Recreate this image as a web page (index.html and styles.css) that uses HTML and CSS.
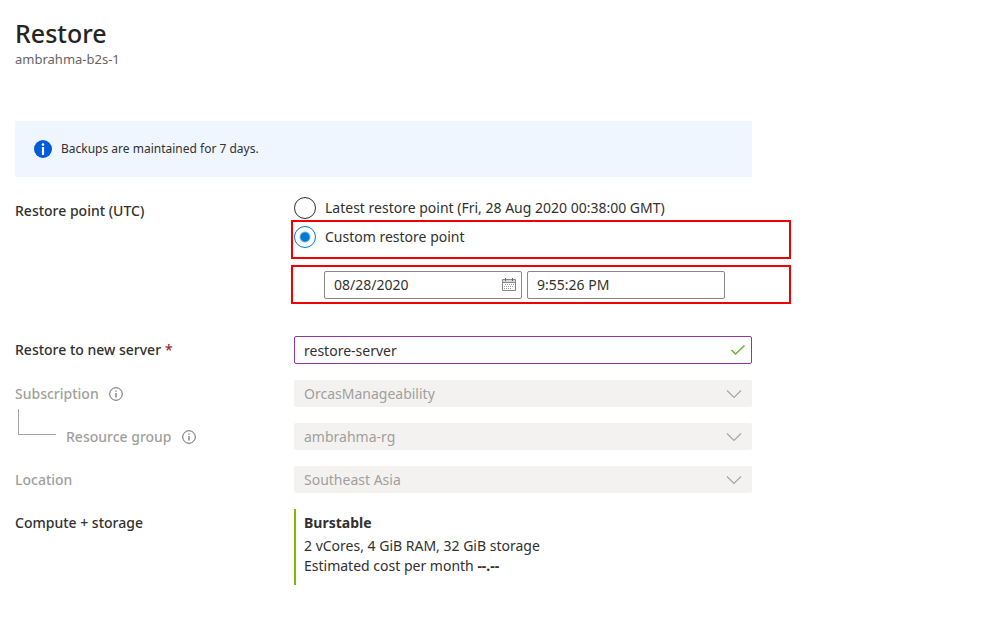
FILE: index.html
```html
<!DOCTYPE html>
<html lang="en">
<head>
<meta charset="utf-8">
<title>Restore</title>
<link rel="stylesheet" href="styles.css">
</head>
<body>
<main class="page">
  <header class="page-header">
    <h1>Restore</h1>
    <p>ambrahma-b2s-1</p>
  </header>

  <div class="banner" role="status">
    <svg class="banner-icon" viewBox="0 0 18 18" aria-hidden="true">
      <circle cx="9" cy="9" r="9" fill="#015cda"/>
      <circle cx="9" cy="4.6" r="1.3" fill="#fff"/>
      <rect x="7.9" y="7" width="2.2" height="8" rx="0.4" fill="#fff"/>
    </svg>
    <span>Backups are maintained for 7 days.</span>
  </div>

  <form class="form">
    <div class="row row-point">
      <span class="label" id="point-label">Restore point (UTC)</span>
      <div class="point" role="radiogroup" aria-labelledby="point-label">
        <label class="option"><input type="radio" name="point"><span>Latest restore point (Fri, 28 Aug 2020 00:38:00 GMT)</span></label>
        <div class="highlight highlight-option">
          <label class="option"><input type="radio" name="point" checked><span>Custom restore point</span></label>
        </div>
        <div class="highlight highlight-time">
          <div class="date">
            <input class="text" type="text" value="08/28/2020" aria-label="Restore date">
            <svg class="date-icon" viewBox="0 0 14 14" aria-hidden="true">
              <path d="M1 2h12v3H1z" fill="#d8d8d8"/>
              <path d="M0.5 1.5h13v11h-13zM0.5 4.5h13" fill="none" stroke="#8a8886"/>
              <path d="M3.5 0v3M10.5 0v3" fill="none" stroke="#666"/>
              <path d="M3 6.5h9M2 8.5h10M2 10.5h7" fill="none" stroke="#999" stroke-dasharray="1 1"/>
            </svg>
          </div>
          <input class="text" type="text" value="9:55:26 PM" aria-label="Restore time">
        </div>
      </div>
    </div>

    <div class="row">
      <label class="label" for="server">Restore to new server <span class="required">*</span></label>
      <div class="field">
        <input class="text text-valid" id="server" type="text" value="restore-server">
        <svg class="field-icon" viewBox="0 0 16 16" aria-hidden="true"><path d="M1.5 8l4 4L14.5 3.5" fill="none" stroke="#6bb12f" stroke-width="1.5"/></svg>
      </div>
    </div>

    <div class="row row-disabled">
      <div class="label"><label for="subscription">Subscription</label>
        <svg class="info" viewBox="0 0 14 14" aria-hidden="true"><circle cx="7" cy="7" r="6.3" fill="none" stroke="#666"/><path d="M7 3.5v1.2M7 6v4.5" stroke="#666" stroke-width="1.2"/></svg>
      </div>
      <div class="field">
        <select id="subscription" disabled><option>OrcasManageability</option></select>
        <svg class="field-icon chevron" viewBox="0 0 16 16" aria-hidden="true"><path d="M1 4.5l7 7 7-7" fill="none" stroke="#a6a6a6" stroke-width="1.2"/></svg>
      </div>
    </div>

    <div class="row row-disabled">
      <div class="label label-nested"><label for="group">Resource group</label>
        <svg class="info" viewBox="0 0 14 14" aria-hidden="true"><circle cx="7" cy="7" r="6.3" fill="none" stroke="#666"/><path d="M7 3.5v1.2M7 6v4.5" stroke="#666" stroke-width="1.2"/></svg>
      </div>
      <div class="field">
        <select id="group" disabled><option>ambrahma-rg</option></select>
        <svg class="field-icon chevron" viewBox="0 0 16 16" aria-hidden="true"><path d="M1 4.5l7 7 7-7" fill="none" stroke="#a6a6a6" stroke-width="1.2"/></svg>
      </div>
    </div>

    <div class="row row-disabled">
      <div class="label"><label for="location">Location</label></div>
      <div class="field">
        <select id="location" disabled><option>Southeast Asia</option></select>
        <svg class="field-icon chevron" viewBox="0 0 16 16" aria-hidden="true"><path d="M1 4.5l7 7 7-7" fill="none" stroke="#a6a6a6" stroke-width="1.2"/></svg>
      </div>
    </div>

    <div class="row row-compute">
      <span class="label">Compute + storage</span>
      <div class="compute">
        <strong class="tier">Burstable</strong>
        <p>2 vCores, 4 GiB RAM, 32 GiB storage</p>
        <p>Estimated cost per month <strong>--.--</strong></p>
      </div>
    </div>
  </form>
</main>
</body>
</html>
```

FILE: styles.css
```css
* { box-sizing: border-box; }

body {
  margin: 0;
  background: #fff;
  color: #323130;
  font: 14px/20px "Noto Sans", "Open Sans", sans-serif;
}

h1, p { margin: 0; }

.page {
  max-width: 752px;
  padding: 16px 0 0 15px;
}

.page-header h1 {
  color: #252423;
  font-size: 25px;
  line-height: 34px;
  font-weight: 500;
}

.page-header p {
  color: #666;
  font-size: 13px;
  line-height: 18px;
}

.banner {
  display: flex;
  align-items: center;
  gap: 9px;
  min-height: 56px;
  margin-top: 53px;
  padding: 0 19px;
  background: #eff6ff;
  font-size: 12px;
}

.banner-icon { width: 18px; height: 18px; }

.form {
  display: grid;
  gap: 16px;
  padding-top: 20px;
}

.row {
  display: grid;
  grid-template-columns: 279px minmax(0, 1fr);
  align-items: center;
}

.row-point {
  align-items: start;
  margin-bottom: 16px;
}

.row-point > .label { padding-top: 4px; }

.label {
  display: flex;
  align-items: center;
  gap: 10px;
  font-weight: 500;
}

.required { margin-left: -6px; color: #a4262c; }

.row-disabled .label,
.row-disabled select { color: #a19f9d; }

.label-nested { padding-left: 3px; }

.label-nested::before {
  content: "";
  width: 37px;
  height: 25px;
  margin-top: -30px;
  border: solid #a6a6a6;
  border-width: 0 0 1px 1px;
}

.info { width: 14px; height: 14px; }

.option {
  display: flex;
  align-items: center;
  gap: 9px;
  height: 22px;
}

.option input {
  appearance: none;
  width: 22px;
  height: 22px;
  margin: 0;
  border: 1px solid #323130;
  border-radius: 50%;
}

.option input:checked {
  border-color: #0078d4;
  background: radial-gradient(circle, #0078d4 4px, #fff 6px);
}

.highlight {
  margin: 0 -39px 0 -3px;
  border: 2px solid #f00000;
}

.highlight-option {
  height: 39px;
  margin-top: 1px;
  padding: 4px 1px;
}

.highlight-time {
  display: grid;
  grid-template-columns: 198px 198px;
  align-items: center;
  gap: 5px;
  height: 39px;
  margin-top: 6px;
  padding-left: 31px;
}

.date, .field { position: relative; }

.text {
  display: block;
  width: 100%;
  height: 28px;
  padding: 0 9px;
  border: 1px solid #8a8886;
  border-radius: 2px;
  background: #fff;
  color: inherit;
  font: inherit;
}

.text-valid { border-color: #8f35a8; }

.date-icon {
  position: absolute;
  top: 7px;
  right: 6px;
  width: 14px;
  height: 14px;
}

select {
  appearance: none;
  display: block;
  width: 100%;
  height: 27px;
  padding: 0 10px;
  border: 0;
  border-radius: 2px;
  background: #f3f2f1;
  font: inherit;
  opacity: 1;
}

.field-icon {
  position: absolute;
  top: 6px;
  right: 6px;
  width: 16px;
  height: 16px;
}

.chevron { right: 10px; }

.row-compute { align-items: start; }

.row-compute > .label { padding-top: 4px; }

.compute {
  padding: 4px 8px 9px;
  border-left: 2px solid #7fba00;
}

.tier { display: block; margin-bottom: 3px; }
```
